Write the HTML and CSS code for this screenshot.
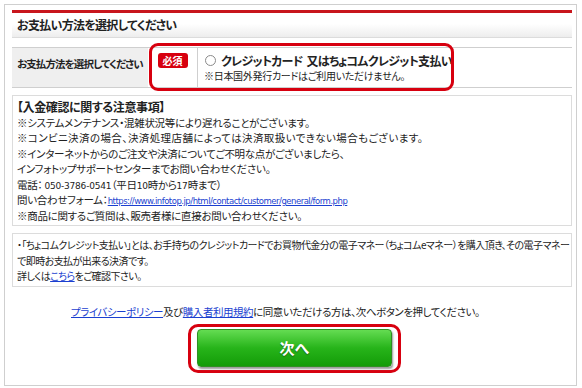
FILE: index.html
```html
<!DOCTYPE html>
<html lang="ja">
<head>
    <meta charset="UTF-8">
    <meta name="viewport" content="width=device-width, initial-scale=1.0">
    <title>お支払い方法を選択してください</title>
    <link rel="stylesheet" href="styles.css">
</head>
<body>
    <div class="page">
        <h1 class="title">お支払い方法を選択してください</h1>

        <div class="pay-row">
            <div class="pay-label">お支払方法を選択してください</div>
            <div class="pay-badge"><span class="badge">必須</span></div>
            <div class="pay-option">
                <label class="option-main"><span class="radio"></span>クレジットカード&nbsp;&nbsp;又はちょコムクレジット支払い</label>
                <div class="option-note">※日本国外発行カードはご利用いただけません。</div>
            </div>
            <div class="highlight"></div>
        </div>

        <div class="notice">
            <h2>【入金確認に関する注意事項】</h2>
            <p>※システムメンテナンス・混雑状況等により遅れることがございます。</p>
            <p class="wide">※コンビニ決済の場合、決済処理店舗によっては決済取扱いできない場合もございます。</p>
            <p>※インターネットからのご注文や決済についてご不明な点がございましたら、</p>
            <p>インフォトップサポートセンターまでお問い合わせください。</p>
            <p>電話：&nbsp;<span class="num">050-3786-0541</span>（平日<span class="num">10</span>時から<span class="num">17</span>時まで）</p>
            <p>問い合わせフォーム：<a class="url" href="#">https://www.infotop.jp/html/contact/customer/general/form.php</a></p>
            <p>※商品に関するご質問は、販売者様に直接お問い合わせください。</p>
        </div>

        <div class="info">
            <p>・「ちょコムクレジット支払い」とは、お手持ちのクレジットカードでお買物代金分の電子マネー（ちょコムeマネー）を購入頂き、その電子マネー</p>
            <p>で即時お支払が出来る決済です。</p>
            <p>詳しくは<a href="#">こちら</a>をご確認下さい。</p>
        </div>

        <p class="terms"><a href="#">プライバシーポリシー</a>及び<a href="#">購入者利用規約</a>に同意いただける方は、次へボタンを押してください。</p>

        <div class="next-ring">
            <button class="next-button">次へ</button>
        </div>
    </div>
</body>
</html>
```

FILE: styles.css
```css
body {
    margin: 0;
    background-color: #fff;
    color: #222;
    font-family: "Noto Sans CJK JP", "Noto Sans", sans-serif;
    font-size: 10.5px;
    letter-spacing: -0.3px;
    font-feature-settings: "palt";
}

p, h1, h2 {
    margin: 0;
}

a {
    color: #1b3fd0;
    text-decoration: underline;
}

.page {
    box-sizing: border-box;
    width: 573px;
    height: 382px;
    margin: 4px 0 0 4px;
    padding: 5px 4px 0 7px;
    border: 1px solid #cfcfcf;
}

.title {
    height: 24px;
    border-top: 3px solid #c8161d;
    border-bottom: 1px solid #dcdcdc;
    background: linear-gradient(#fff 45%, #ededed);
    padding-left: 5px;
    font-size: 12px;
    font-weight: bold;
    letter-spacing: -0.7px;
    line-height: 24px;
}

.pay-row {
    position: relative;
    display: flex;
    height: 39px;
    margin-top: 9px;
    border-top: 1px solid #cfcfcf;
    border-bottom: 1px solid #cfcfcf;
}

.pay-label {
    width: 131px;
    padding: 8px 0 0 5px;
    background-color: #efefef;
    font-size: 10.5px;
    font-weight: bold;
    letter-spacing: -0.9px;
    white-space: nowrap;
}

.pay-badge {
    width: 49px;
    padding-top: 5px;
    text-align: center;
}

.badge {
    display: inline-block;
    padding: 0 5px;
    border-radius: 3px;
    background-color: #d7000f;
    color: #fff;
    font-size: 10px;
    font-weight: bold;
    letter-spacing: 0;
    line-height: 15px;
}

.pay-option {
    flex: 1;
    padding: 4px 0 0 6px;
    border-left: 1px solid #cfcfcf;
}

.option-main {
    display: flex;
    align-items: center;
    font-size: 12px;
    font-weight: bold;
    letter-spacing: -0.7px;
    line-height: 17px;
    white-space: nowrap;
}

.radio {
    width: 9px;
    height: 9px;
    margin: 0 5px 0 1px;
    border: 1px solid #8a8a8a;
    border-radius: 50%;
}

.option-note {
    font-size: 10px;
    line-height: 14px;
}

.highlight {
    position: absolute;
    left: 137px;
    top: -5px;
    width: 299px;
    height: 42px;
    border: 3px solid #d7000f;
    border-radius: 9px;
    pointer-events: none;
}

.notice, .info {
    border: 1px solid #dcdcdc;
    padding: 3px 4px 2px;
    line-height: 15.5px;
}

.notice {
    margin-top: 7px;
}

.notice h2 {
    font-size: 12px;
    font-weight: bold;
    letter-spacing: -0.4px;
}

.notice .wide {
    letter-spacing: 0.4px;
}

.num, .url {
    font-family: "DejaVu Sans", sans-serif;
    font-size: 9px;
    letter-spacing: -0.2px;
    line-height: 0;
}

.url {
    font-size: 8.5px;
    letter-spacing: -0.5px;
}

.info {
    margin-top: 7px;
    font-size: 10px;
    letter-spacing: -0.55px;
    white-space: nowrap;
}

.terms {
    margin-top: 17px;
    padding-left: 59px;
    letter-spacing: -0.45px;
    line-height: 15px;
    white-space: nowrap;
}

.next-ring {
    width: fit-content;
    margin: 5px 0 0 176px;
    padding: 2px 6px 3px;
    border: 3px solid #d7000f;
    border-radius: 10px;
}

.next-button {
    display: block;
    width: 195px;
    height: 38px;
    border: 1px solid #2f8f23;
    border-radius: 4px;
    background: linear-gradient(#64dc52, #27b41a 50%, #139c08);
    box-shadow: 1px 2px 2px #9a9a9a;
    color: #fff;
    font-family: "Noto Sans CJK JP", sans-serif;
    font-size: 15px;
    font-weight: bold;
    text-shadow: 0 1px 1px #1b6a12;
    cursor: pointer;
}
```
